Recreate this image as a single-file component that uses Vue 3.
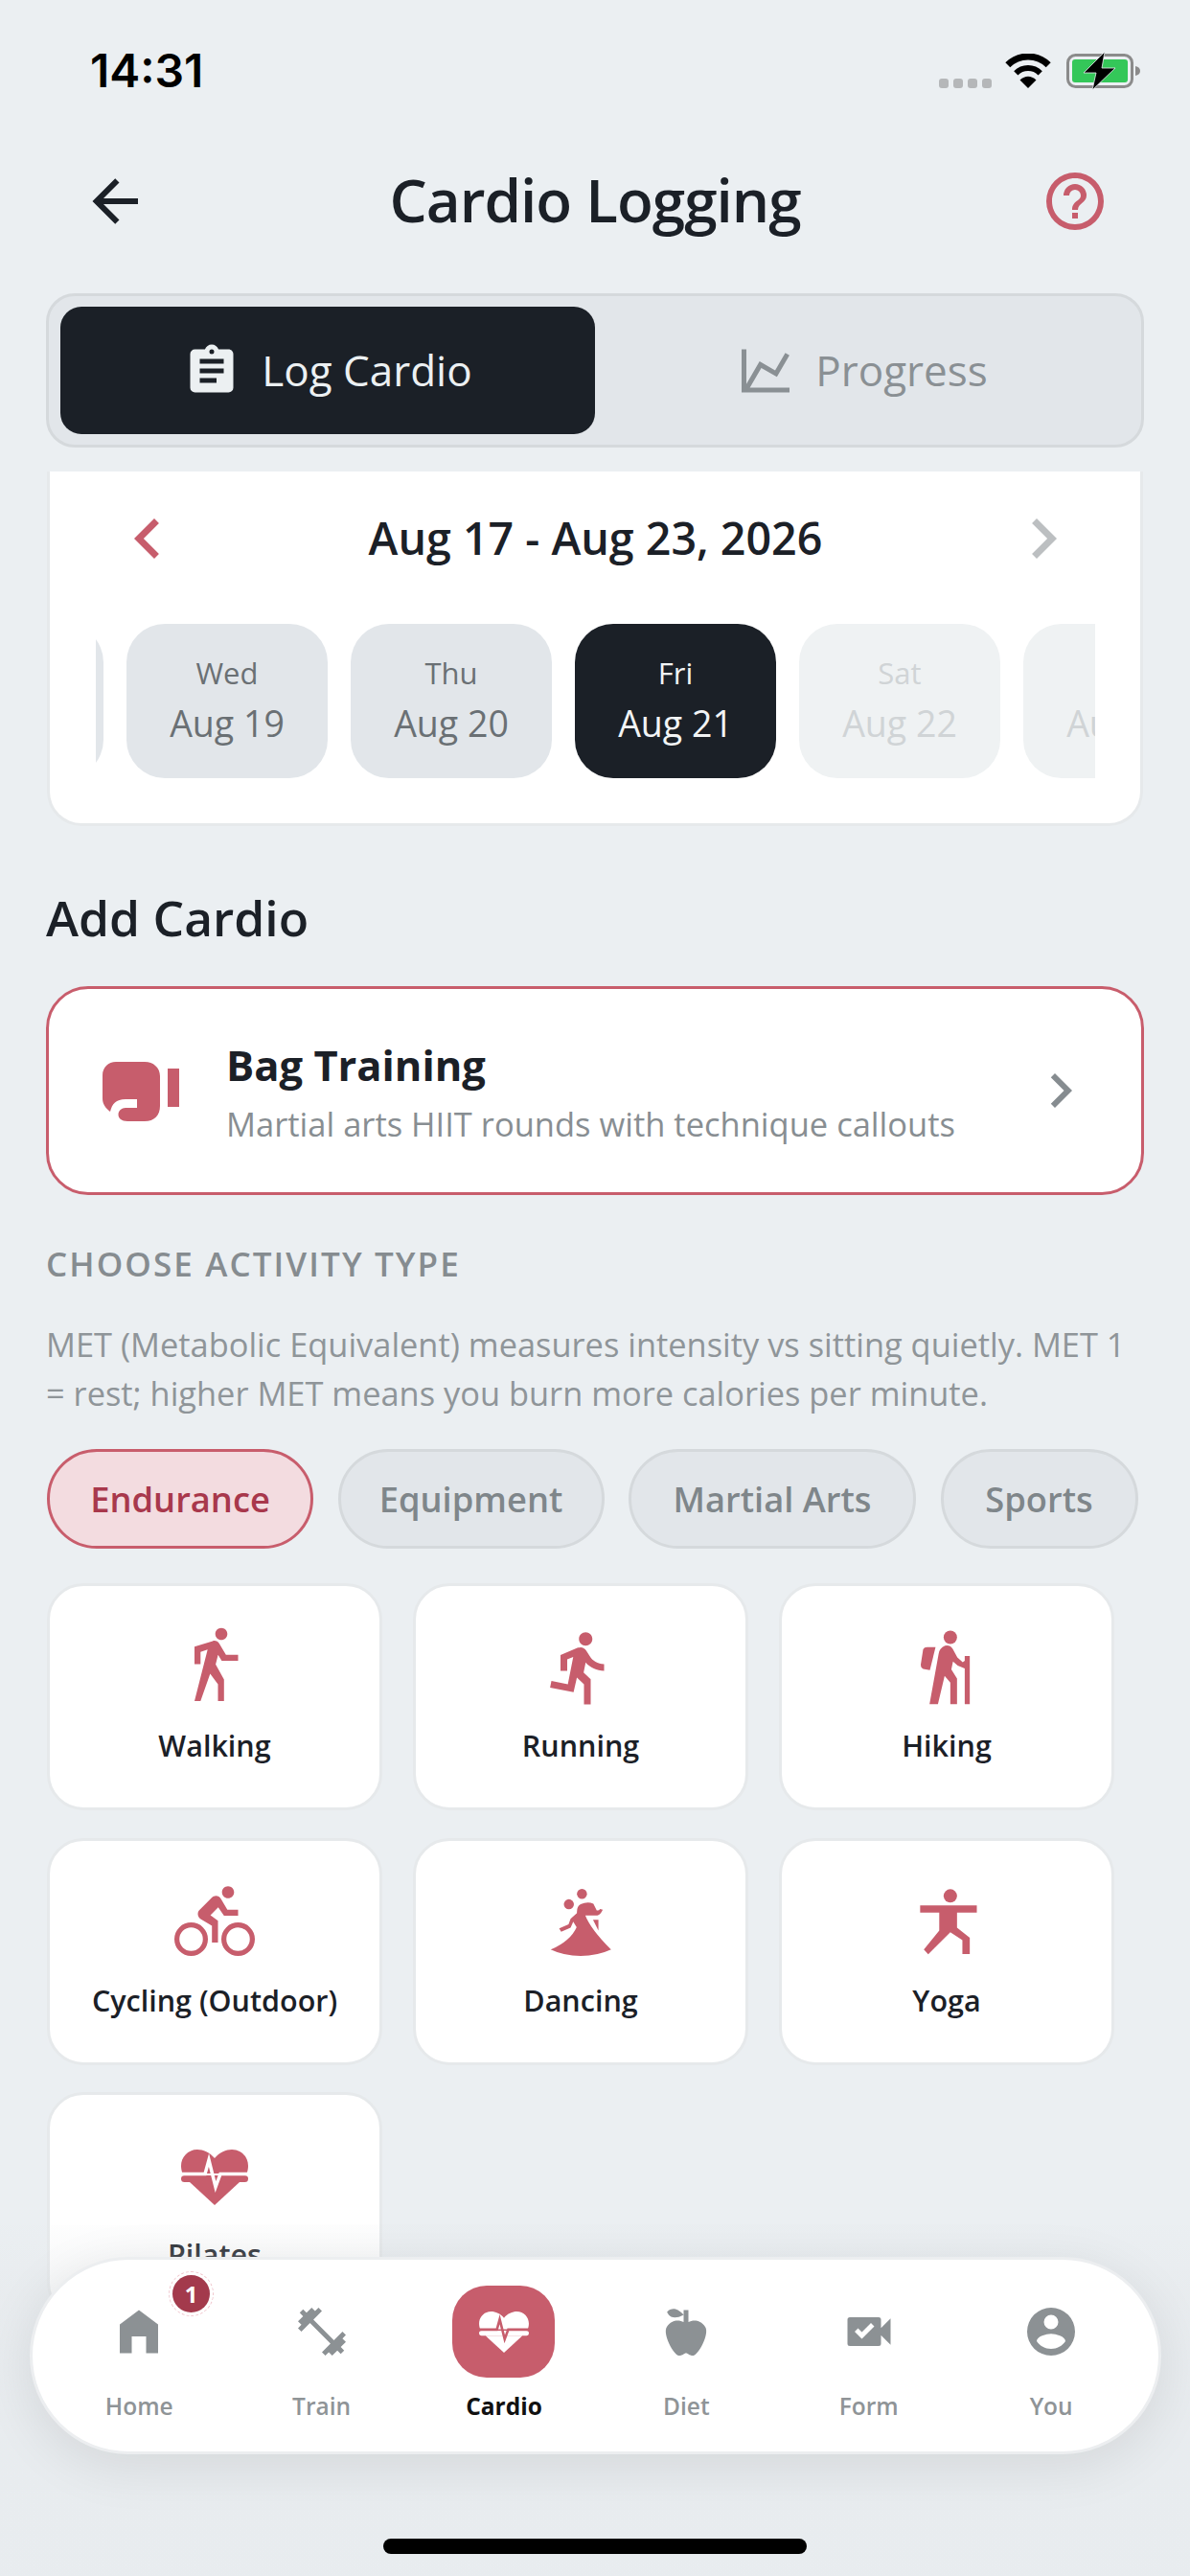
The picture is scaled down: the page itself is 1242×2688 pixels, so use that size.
<template>
  <div class="screen">
    <div class="status">
      <span class="time">14:31</span>
      <div class="status-right">
        <div class="signal"><i v-for="n in 4" :key="n"></i></div>
        <svg class="wifi" viewBox="0 0 48 36">
          <path d="M2.8 11.8A30 30 0 0 1 45.2 11.8" fill="none" stroke="#000" stroke-width="7" />
          <path d="M11.3 20.3A18 18 0 0 1 36.7 20.3" fill="none" stroke="#000" stroke-width="6" />
          <path d="M24 36L15.5 27.5Q24 20 32.5 27.5Z" fill="#000" />
        </svg>
        <svg class="battery" viewBox="0 0 78 40">
          <rect x="1.5" y="3.5" width="67" height="33" rx="8" fill="none" stroke="#8b8b8b" stroke-width="3" />
          <rect x="6" y="8" width="58" height="24" rx="3" fill="#34c759" />
          <path d="M72 15Q77 16 77 20T72 25Z" fill="#8b8b8b" />
          <path d="M40 0L18 22H31L27 40L51 17H37Z" fill="#000" stroke="#ebeff2" stroke-width="0.8" />
        </svg>
      </div>
    </div>

    <header class="header">
      <svg class="hd-icon" viewBox="0 0 24 24"><path :d="icons.back" fill="#1b2027" /></svg>
      <h1>Cardio Logging</h1>
      <svg class="hd-icon" viewBox="0 0 24 24"><path :d="icons.help" fill="#c75d6c" /></svg>
    </header>

    <div class="segment">
      <div class="seg-tab active">
        <svg viewBox="0 0 24 24"><path :d="icons.clipboard" /></svg>
        <span>Log Cardio</span>
      </div>
      <div class="seg-tab">
        <svg viewBox="0 0 24 24"><path :d="icons.chart" /></svg>
        <span>Progress</span>
      </div>
    </div>

    <section class="date-card">
      <div class="date-row">
        <svg viewBox="0 0 24 24"><path :d="icons.left" fill="#c75d6c" /></svg>
        <span>Aug 17 - Aug 23, 2026</span>
        <svg viewBox="0 0 24 24"><path :d="icons.right" fill="#bcbfc1" /></svg>
      </div>
      <div class="days">
        <div v-for="d in days" :key="d.date" class="day" :class="d.state">
          <span class="dow">{{ d.dow }}</span>
          <span class="dnum">{{ d.date }}</span>
        </div>
      </div>
    </section>

    <h2 class="add-title">Add Cardio</h2>

    <div class="bag-card">
      <svg class="glove" viewBox="0 0 80 64">
        <path d="M14 0H44C53 0 60 6 60 15V46C60 56 54 62 44 62H26C20 62 16.5 59 16.5 55C16.5 51 20 48 24 48H36V39H24C14 39 10 44 8 52C3 48 0 44 0 38V14C0 6 6 0 14 0Z" fill="#c75d6c" />
        <rect x="68" y="7" width="12" height="40" fill="#c75d6c" />
      </svg>
      <div class="bag-text">
        <div class="bag-title">Bag Training</div>
        <div class="bag-sub">Martial arts HIIT rounds with technique callouts</div>
      </div>
      <svg class="bag-chev" viewBox="0 0 24 24"><path :d="icons.right" fill="#868c90" /></svg>
    </div>

    <div class="label">CHOOSE ACTIVITY TYPE</div>
    <p class="met">MET (Metabolic Equivalent) measures intensity vs sitting quietly. MET 1 = rest; higher MET means you burn more calories per minute.</p>

    <div class="chips">
      <div v-for="(c, i) in chips" :key="c" class="chip" :class="{ active: i === 0 }"><span>{{ c }}</span></div>
    </div>

    <div class="grid">
      <div v-for="a in activities" :key="a.name" class="activity">
        <svg v-if="a.paths" class="act-icon" viewBox="0 0 24 24">
          <path v-for="p in a.paths" :key="p" :d="p" />
        </svg>
        <svg v-else class="act-heart" viewBox="0 0 70 58">
          <path :d="heartTop" fill="#c75d6c" />
          <rect y="27" width="70" height="7" rx="3.5" fill="#c75d6c" />
          <path d="M9 34H61L35 58Z" fill="#c75d6c" />
          <path :d="heartLine" fill="none" stroke="#fff" stroke-width="3.5" />
        </svg>
        <span>{{ a.name }}</span>
      </div>
    </div>

    <div class="fade"></div>

    <nav class="tabbar">
      <div v-for="t in tabs" :key="t.name" class="tab" :class="{ current: t.current }">
        <div class="tab-icon">
          <svg v-if="t.path" viewBox="0 0 24 24"><path :d="t.path" fill="#8c9194" /></svg>
          <svg v-else class="tab-heart" viewBox="0 0 70 58">
            <path :d="heartTop" fill="#fff" />
            <rect y="27" width="70" height="7" rx="3.5" fill="#fff" />
            <path d="M9 34H61L35 58Z" fill="#fff" />
            <path :d="heartLine" fill="none" stroke="#c75d6c" stroke-width="3.5" />
          </svg>
          <div v-if="t.badge" class="badge">{{ t.badge }}</div>
        </div>
        <span>{{ t.name }}</span>
      </div>
    </nav>

    <div class="home-bar"></div>
  </div>
</template>

<script setup>
const icons = {
  back: "M20,11V13H8L13.5,18.5L12.08,19.92L4.16,12L12.08,4.08L13.5,5.5L8,11H20Z",
  help: "M11,18H13V16H11V18M12,2A10,10 0 0,0 2,12A10,10 0 0,0 12,22A10,10 0 0,0 22,12A10,10 0 0,0 12,2M12,20C7.59,20 4,16.41 4,12C4,7.59 7.59,4 12,4C16.41,4 20,7.59 20,12C20,16.41 16.41,20 12,20M12,6A4,4 0 0,0 8,10H10A2,2 0 0,1 12,8A2,2 0 0,1 14,10C14,12 11,11.75 11,15H13C13,12.75 16,12.5 16,10A4,4 0 0,0 12,6Z",
  clipboard: "M17,9H7V7H17M17,13H7V11H17M14,17H7V15H14M12,3A1,1 0 0,1 13,4A1,1 0 0,1 12,5A1,1 0 0,1 11,4A1,1 0 0,1 12,3M19,3H14.82C14.4,1.84 13.3,1 12,1C10.7,1 9.6,1.84 9.18,3H5A2,2 0 0,0 3,5V19A2,2 0 0,0 5,21H19A2,2 0 0,0 21,19V5C21,3.89 20.1,3 19,3Z",
  chart: "M16,11.78L20.24,4.45L21.97,5.45L16.74,14.5L10.23,10.75L5.46,19H22V21H2V3H4V17.54L9.5,8L16,11.78Z",
  left: "M15.41,16.58L10.83,12L15.41,7.41L14,6L8,12L14,18L15.41,16.58Z",
  right: "M8.59,16.58L13.17,12L8.59,7.41L10,6L16,12L10,18L8.59,16.58Z",
};

const heartTop = "M35 9C30 3 23 0 17 0C7 0 0 8 0 17C0 20 .5 22 1.5 25H68.5C69.5 22 70 20 70 17C70 8 63 0 53 0C47 0 40 3 35 9Z";
const heartLine = "M0 25.5H25L29 11L36 39L41 25.5H70";

const days = [
  { dow: "Tue", date: "Aug 18", state: "past" },
  { dow: "Wed", date: "Aug 19", state: "past" },
  { dow: "Thu", date: "Aug 20", state: "past" },
  { dow: "Fri", date: "Aug 21", state: "today" },
  { dow: "Sat", date: "Aug 22", state: "future" },
  { dow: "Sun", date: "Aug 23", state: "future" },
];

const chips = ["Endurance", "Equipment", "Martial Arts", "Sports"];

const activities = [
  {
    name: "Walking",
    paths: ["M14.12,10H19V8.2H15.38L13.38,4.87C13.08,4.37 12.54,4.03 11.92,4.03C11.74,4.03 11.58,4.06 11.42,4.11L6,5.8V11H7.8V7.33L9.91,6.67L6,22H7.8L10.67,13.89L13,17V22H14.8V15.59L12.31,11.05L13.03,8.18M14,3.8C15,3.8 15.8,3 15.8,2C15.8,1 15,0.2 14,0.2C13,0.2 12.2,1 12.2,2C12.2,3 13,3.8 14,3.8Z"],
  },
  {
    name: "Running",
    paths: ["M13.5,5.5C14.59,5.5 15.5,4.59 15.5,3.5C15.5,2.38 14.59,1.5 13.5,1.5C12.39,1.5 11.5,2.38 11.5,3.5C11.5,4.59 12.39,5.5 13.5,5.5M9.89,19.38L10.89,15L13,17V23H15V15.5L12.89,13.5L13.5,10.5C14.79,12 16.79,13 19,13V11C17.09,11 15.5,10 14.69,8.58L13.69,7C13.29,6.38 12.69,6 12,6C11.69,6 11.5,6.08 11.19,6.08L6,8.28V13H8V9.58L9.79,8.88L8.19,17L3.29,16L2.89,18L9.89,19.38Z"],
  },
  {
    name: "Hiking",
    paths: [
      "M13.1 5A2 2 0 1 0 13.1 1A2 2 0 1 0 13.1 5Z",
      "M11.5 5.5Q13 5.2 13.8 6.4L15.2 9L16.8 10.4L17.4 10V8.6H18.9V22.9H17.4V12.3L15.3 11.4L13.9 10.2L13.4 12.6L15.1 15.3V22.9H13.1V16.5L11.4 14.5L9.4 22.9H6.9L9.6 8Q9.8 6.2 11.5 5.5Z",
      "M6.2 5.9H8.7L7 12.8L5 12.4Q4.2 12 4.3 11L5 6.6Q5.3 5.9 6.2 5.9Z",
    ],
  },
  {
    name: "Cycling (Outdoor)",
    paths: ["M5,20.5A3.5,3.5 0 0,1 1.5,17A3.5,3.5 0 0,1 5,13.5A3.5,3.5 0 0,1 8.5,17A3.5,3.5 0 0,1 5,20.5M5,12A5,5 0 0,0 0,17A5,5 0 0,0 5,22A5,5 0 0,0 10,17A5,5 0 0,0 5,12M14.8,10H19V8.2H15.8L13.86,4.93C13.57,4.43 13,4.1 12.4,4.1C11.93,4.1 11.5,4.3 11.2,4.6L7.5,8.29C7.19,8.6 7,9 7,9.5C7,10.13 7.33,10.66 7.85,10.97L11.2,13V18H13V11.5L10.75,9.85L13.07,7.5M19,20.5A3.5,3.5 0 0,1 15.5,17A3.5,3.5 0 0,1 19,13.5A3.5,3.5 0 0,1 22.5,17A3.5,3.5 0 0,1 19,20.5M19,12A5,5 0 0,0 14,17A5,5 0 0,0 19,22A5,5 0 0,0 24,17A5,5 0 0,0 19,12M16,4.8C17,4.8 17.8,4 17.8,3C17.8,2 17,1.2 16,1.2C15,1.2 14.2,2 14.2,3C14.2,4 15,4.8 16,4.8Z"],
  },
  {
    name: "Dancing",
    paths: [
      "M12.4 5A1.45 1.45 0 1 0 12.4 2A1.45 1.45 0 1 0 12.4 5Z",
      "M8.5 8.1A1.5 1.5 0 1 0 8.5 5.1A1.5 1.5 0 1 0 8.5 8.1Z",
      "M13.4 9.9L17 9.9Q18 9.6 18.6 8.2L17.8 8Q17.4 8.6 16.8 8.4L15.8 6.4Q14 5.6 12 6.6Q10.8 7.2 10.9 9.2L9 10.9L8.4 12.6L5.6 13.8L6.2 14.8L9 13.6L9.8 11.8L10.8 13.4Q9 17.5 3.05 20.1Q7 22 12 22Q17 22 21.1 20.1Q15 14 13.4 9.9Z",
      "M15.7 11.2H17.3V14.4Z",
    ],
  },
  {
    name: "Yoga",
    paths: [
      "M13.1 6.1A2 2 0 1 0 13.1 2.1A2 2 0 1 0 13.1 6.1Z",
      "M4.1 6.9H21V9.05H15.1V13.6L18.9 16.6V21.4H16.7V17.3L13.1 14.9L6.5 21.5L5.2 20.1L9.8 14.4V9.05H4.1Z",
    ],
  },
  { name: "Pilates", paths: null },
];

const tabs = [
  { name: "Home", path: "M12,3L20,9V21H15V14H9V21H4V9L12,3Z", badge: 1 },
  { name: "Train", path: "M20.57,14.86L22,13.43L20.57,12L17,15.57L8.43,7L12,3.43L10.57,2L9.14,3.43L7.71,2L5.57,4.14L4.14,2.71L2.71,4.14L4.14,5.57L2,7.71L3.43,9.14L2,10.57L3.43,12L7,8.43L15.57,17L12,20.57L13.43,22L14.86,20.57L16.29,22L18.43,19.86L19.86,21.29L21.29,19.86L19.86,18.43L22,16.29L20.57,14.86Z" },
  { name: "Cardio", current: true },
  { name: "Diet", path: "M20,10C22,13 17,22 15,22C13,22 13,21 12,21C11,21 11,22 9,22C7,22 2,13 4,10C6,7 9,7 11,8V5C5.38,8.07 4.11,3.78 4.11,3.78C4.11,3.78 6.77,0.19 11,5V3H13V8C15,7 18,7 20,10Z" },
  { name: "Form", path: "M17,10.5V7A1,1 0 0,0 16,6H4A1,1 0 0,0 3,7V17A1,1 0 0,0 4,18H16A1,1 0 0,0 17,17V13.5L21,17.5V6.5L17,10.5M9,15L6,12L7.4,10.6L9,12.2L12.8,8.4L14.2,9.8L9,15Z" },
  { name: "You", path: "M12,19.2C9.5,19.2 7.29,17.92 6,16C6.03,14 10,12.9 12,12.9C14,12.9 17.97,14 18,16C16.71,17.92 14.5,19.2 12,19.2M12,5A3,3 0 0,1 15,8A3,3 0 0,1 12,11A3,3 0 0,1 9,8A3,3 0 0,1 12,5M12,2A10,10 0 0,0 2,12A10,10 0 0,0 12,22A10,10 0 0,0 22,12A10,10 0 0,0 12,2Z" },
];
</script>

<style>
html, body { margin: 0; background: #ebeff2; }
</style>

<style scoped>
.screen {
  position: relative;
  width: 1242px;
  height: 2688px;
  overflow: hidden;
  background: #ebeff2;
  color: #1b2027;
  font-family: "Open Sans", sans-serif;
}

.status {
  height: 150px;
  box-sizing: border-box;
  padding: 48px 51px 0 94px;
  display: flex;
  justify-content: space-between;
  align-items: flex-start;
}
.time {
  font-family: Inter, sans-serif;
  font-size: 48px;
  font-weight: 600;
  line-height: 52px;
  color: #000;
}
.status-right {
  display: flex;
  align-items: flex-start;
  padding-top: 6px;
}
.signal {
  display: flex;
  gap: 5px;
  margin: 28px 14px 0 0;
}
.signal i {
  width: 10px;
  height: 10px;
  border-radius: 3px;
  background: #b5b7b9;
}
.wifi { width: 48px; height: 36px; margin-top: 2px; }
.battery { width: 78px; height: 40px; margin-left: 16px; }

.header {
  height: 120px;
  padding: 0 84px;
  display: flex;
  align-items: center;
  justify-content: space-between;
}
.hd-icon { width: 72px; height: 72px; }
.header h1 {
  margin: 0 0 4px;
  font-size: 62px;
  font-weight: 600;
  letter-spacing: -1px;
}

.segment {
  margin: 36px 48px 0;
  height: 161px;
  box-sizing: border-box;
  padding: 11px 12px;
  display: grid;
  grid-template-columns: 1fr 1fr;
  background: #e2e6ea;
  border: 3px solid #d5d9dc;
  border-radius: 30px;
}
.seg-tab {
  display: flex;
  align-items: center;
  justify-content: center;
  gap: 22px;
  border-radius: 22px;
  font-size: 44px;
  font-weight: 500;
  color: #8a9094;
}
.seg-tab span { margin-bottom: 2px; }
.seg-tab svg { width: 60px; height: 60px; fill: #8a9094; }
.seg-tab.active { background: #1b2027; color: #ecf0f2; }
.seg-tab.active svg { fill: #ecf0f2; }

.date-card {
  margin: 25px 49px 0;
  height: 370px;
  box-sizing: border-box;
  background: #fff;
  border: 3px solid #e6e9eb;
  border-top: 0;
  border-radius: 0 0 36px 36px;
}
.date-row {
  padding: 28px 59px 0 60px;
  display: flex;
  justify-content: space-between;
  align-items: center;
  font-size: 46.6px;
  font-weight: 600;
}
.date-row span { margin-bottom: 2px; }
.date-row svg { width: 84px; height: 84px; }
.days {
  margin: 47px 47px 0 48px;
  display: flex;
  gap: 24px;
  overflow: hidden;
}
.day {
  flex: none;
  width: 210px;
  height: 161px;
  border-radius: 40px;
  box-sizing: border-box;
  padding-bottom: 3px;
  display: flex;
  flex-direction: column;
  align-items: center;
  justify-content: center;
  gap: 6px;
  background: #e2e6ea;
  color: #6a7074;
}
.day:first-child { margin-left: -202px; }
.dow { font-size: 31px; line-height: 44px; }
.dnum { font-size: 37.5px; line-height: 50px; font-weight: 500; }
.day.today { background: #1b2027; color: #f2f4f5; }
.day.future { background: #eff2f3; color: #d0d4d6; }

.add-title {
  margin: 67px 48px 0;
  font-size: 51.5px;
  line-height: 56px;
  font-weight: 600;
}

.bag-card {
  margin: 44px 48px 0;
  height: 218px;
  box-sizing: border-box;
  padding: 0 48px 0 56px;
  display: flex;
  align-items: center;
  background: #fff;
  border: 3px solid #c85d6c;
  border-radius: 44px;
}
.glove { width: 80px; height: 64px; flex: none; margin-top: 4px; }
.bag-text { flex: 1; margin-left: 49px; padding-top: 4px; }
.bag-title { font-size: 43.5px; line-height: 56px; font-weight: 700; }
.bag-sub { margin-top: 9px; font-size: 34.5px; line-height: 48px; color: #888e92; }
.bag-chev { width: 72px; height: 72px; flex: none; }

.label {
  margin: 50px 48px 0;
  font-size: 35px;
  line-height: 44px;
  font-weight: 600;
  letter-spacing: 2.1px;
  color: #868c90;
}
.met {
  margin: 36px 48px 0;
  font-size: 34.4px;
  line-height: 51px;
  color: #8f9599;
}

.chips {
  margin: 33px 49px 0;
  display: grid;
  grid-template-columns: 278px 278px 300px 206px;
  gap: 25.5px;
}
.chip {
  height: 104px;
  box-sizing: border-box;
  display: flex;
  align-items: center;
  justify-content: center;
  border: 3px solid #d5d9dc;
  border-radius: 52px;
  background: #e2e6ea;
  color: #7f868a;
  font-size: 36.3px;
  font-weight: 600;
}
.chip.active {
  border-color: #c85d6c;
  background: #f3dce0;
  color: #a8384c;
}

.grid {
  margin: 36px 0 0 49px;
  display: grid;
  grid-template-columns: repeat(3, 350px);
  grid-auto-rows: 237px;
  column-gap: 32px;
  row-gap: 28.5px;
}
.activity {
  box-sizing: border-box;
  padding-top: 43px;
  display: flex;
  flex-direction: column;
  align-items: center;
  background: #fff;
  border: 3px solid #e6e9eb;
  border-radius: 38px;
  font-size: 30.5px;
  font-weight: 600;
}
.act-icon { width: 84px; height: 84px; fill: #c75d6c; }
.act-heart { width: 70px; height: 58px; margin: 14px 0 12px; }
.activity span { margin-top: 17px; line-height: 44px; }

.fade {
  position: absolute;
  left: 0;
  right: 0;
  top: 2322px;
  bottom: 0;
  background: linear-gradient(to bottom, rgba(226, 230, 233, 0.05), rgba(228, 231, 234, 0.4) 20%, rgba(232, 236, 239, 0.95));
}

.tabbar {
  position: absolute;
  left: 31px;
  top: 2355px;
  width: 1181px;
  height: 206px;
  box-sizing: border-box;
  padding: 0 16px;
  display: grid;
  grid-template-columns: repeat(6, 190.4px);
  background: #fff;
  border: 3px solid #eceef0;
  border-radius: 103px;
  box-shadow: 0 12px 56px rgba(0, 0, 0, 0.09);
}
.tab {
  display: flex;
  flex-direction: column;
  align-items: center;
  padding-top: 27px;
  font-size: 24.5px;
  font-weight: 600;
  color: #8f9497;
}
.tab-icon {
  position: relative;
  width: 107px;
  height: 96px;
  display: flex;
  align-items: center;
  justify-content: center;
  border-radius: 36px;
}
.tab-icon svg { width: 60px; height: 60px; }
.tab-icon .tab-heart { width: 52px; height: 43px; }
.tab.current .tab-icon { background: #c75d6c; }
.tab.current { color: #111; font-weight: 700; }
.tab span { margin-top: 12px; line-height: 36px; }
.badge {
  position: absolute;
  left: 88.5px;
  top: -11px;
  width: 39px;
  height: 39px;
  border-radius: 50%;
  background: #a33a4c;
  color: #fff;
  font-size: 24px;
  font-weight: 700;
  display: flex;
  align-items: center;
  justify-content: center;
  outline: 1px dashed #f0c5cc;
  outline-offset: 3px;
}

.home-bar {
  position: absolute;
  left: 400px;
  top: 2649px;
  width: 442px;
  height: 16px;
  border-radius: 8px;
  background: #000;
}
</style>
